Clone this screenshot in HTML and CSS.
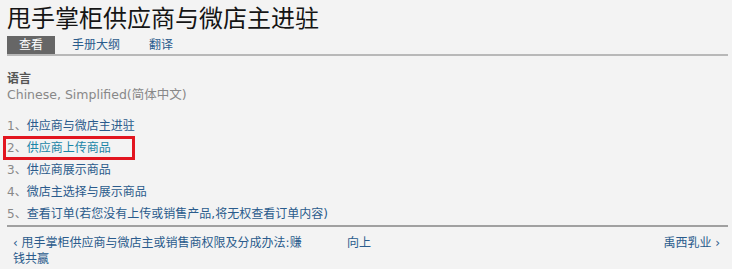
FILE: index.html
```html
<!DOCTYPE html>
<html>
<head>
    <title>甩手掌柜供应商与微店主进驻</title>
    <link rel="stylesheet" href="styles.css">
</head>
<body>
    <div class="book-page">
        <h1 class="page-title">甩手掌柜供应商与微店主进驻</h1>

        <div class="tabs">
            <a class="tab active" href="#">查看</a>
            <a class="tab" href="#">手册大纲</a>
            <a class="tab" href="#">翻译</a>
        </div>

        <div class="language">
            <div class="language-label">语言</div>
            <div class="language-value">Chinese, Simplified(简体中文)</div>
        </div>

        <ul class="chapters">
            <li><span class="num">1、</span><a href="#">供应商与微店主进驻</a></li>
            <li class="marked"><span class="num">2、</span><a class="hover" href="#">供应商上传商品</a></li>
            <li><span class="num">3、</span><a href="#">供应商展示商品</a></li>
            <li><span class="num">4、</span><a href="#">微店主选择与展示商品</a></li>
            <li><span class="num">5、</span><a href="#">查看订单(若您没有上传或销售产品,将无权查看订单内容)</a></li>
        </ul>

        <div class="book-nav">
            <a class="nav-prev" href="#">‹ 甩手掌柜供应商与微店主或销售商权限及分成办法:赚钱共赢</a>
            <a class="nav-up" href="#">向上</a>
            <a class="nav-next" href="#">禹西乳业 ›</a>
        </div>
    </div>
</body>
</html>
```

FILE: styles.css
```css
body {
    margin: 0;
    background: #f3f3f3;
    color: #333;
    font-family: "DejaVu Sans", "Noto Sans CJK SC", sans-serif;
    font-size: 12px;
}

a {
    color: #2a5b8c;
    text-decoration: none;
}

.book-page {
    padding: 2px 4px 0 7px;
}

.page-title {
    margin: 0;
    font-size: 24px;
    font-weight: normal;
    line-height: 30px;
    color: #151515;
    font-family: "Noto Sans CJK SC", sans-serif;
}

.tabs {
    display: flex;
    margin-top: 4px;
    border-bottom: 2px solid #b8b8b8;
}

.tab {
    height: 18px;
    line-height: 18px;
    padding: 0 12px;
    margin-right: 5px;
    font-size: 12px;
}

.tab.active {
    background: #666;
    color: #fff;
}

.language {
    margin-top: 15px;
}

.language-label {
    font-weight: bold;
    color: #555;
    line-height: 16px;
}

.language-value {
    color: #888;
    font-size: 12.5px;
    line-height: 15px;
}

.chapters {
    list-style: none;
    margin: 13px 0 0;
    padding: 0;
}

.chapters li {
    line-height: 22px;
    position: relative;
}

.chapters .num {
    color: #888;
}

.chapters a.hover {
    color: #1a86a8;
}

.chapters li.marked::after {
    content: "";
    position: absolute;
    left: -4px;
    top: -1px;
    width: 126px;
    height: 18px;
    border: 3px solid #e2151f;
}

.book-nav {
    display: flex;
    align-items: flex-start;
    padding-top: 8px;
    border-top: 2px solid #a0a0a0;
    line-height: 16px;
}

.nav-prev {
    width: 296px;
    padding-left: 6px;
}

.nav-up {
    margin-left: 38px;
}

.nav-next {
    margin-left: auto;
    margin-right: 8px;
}
```
